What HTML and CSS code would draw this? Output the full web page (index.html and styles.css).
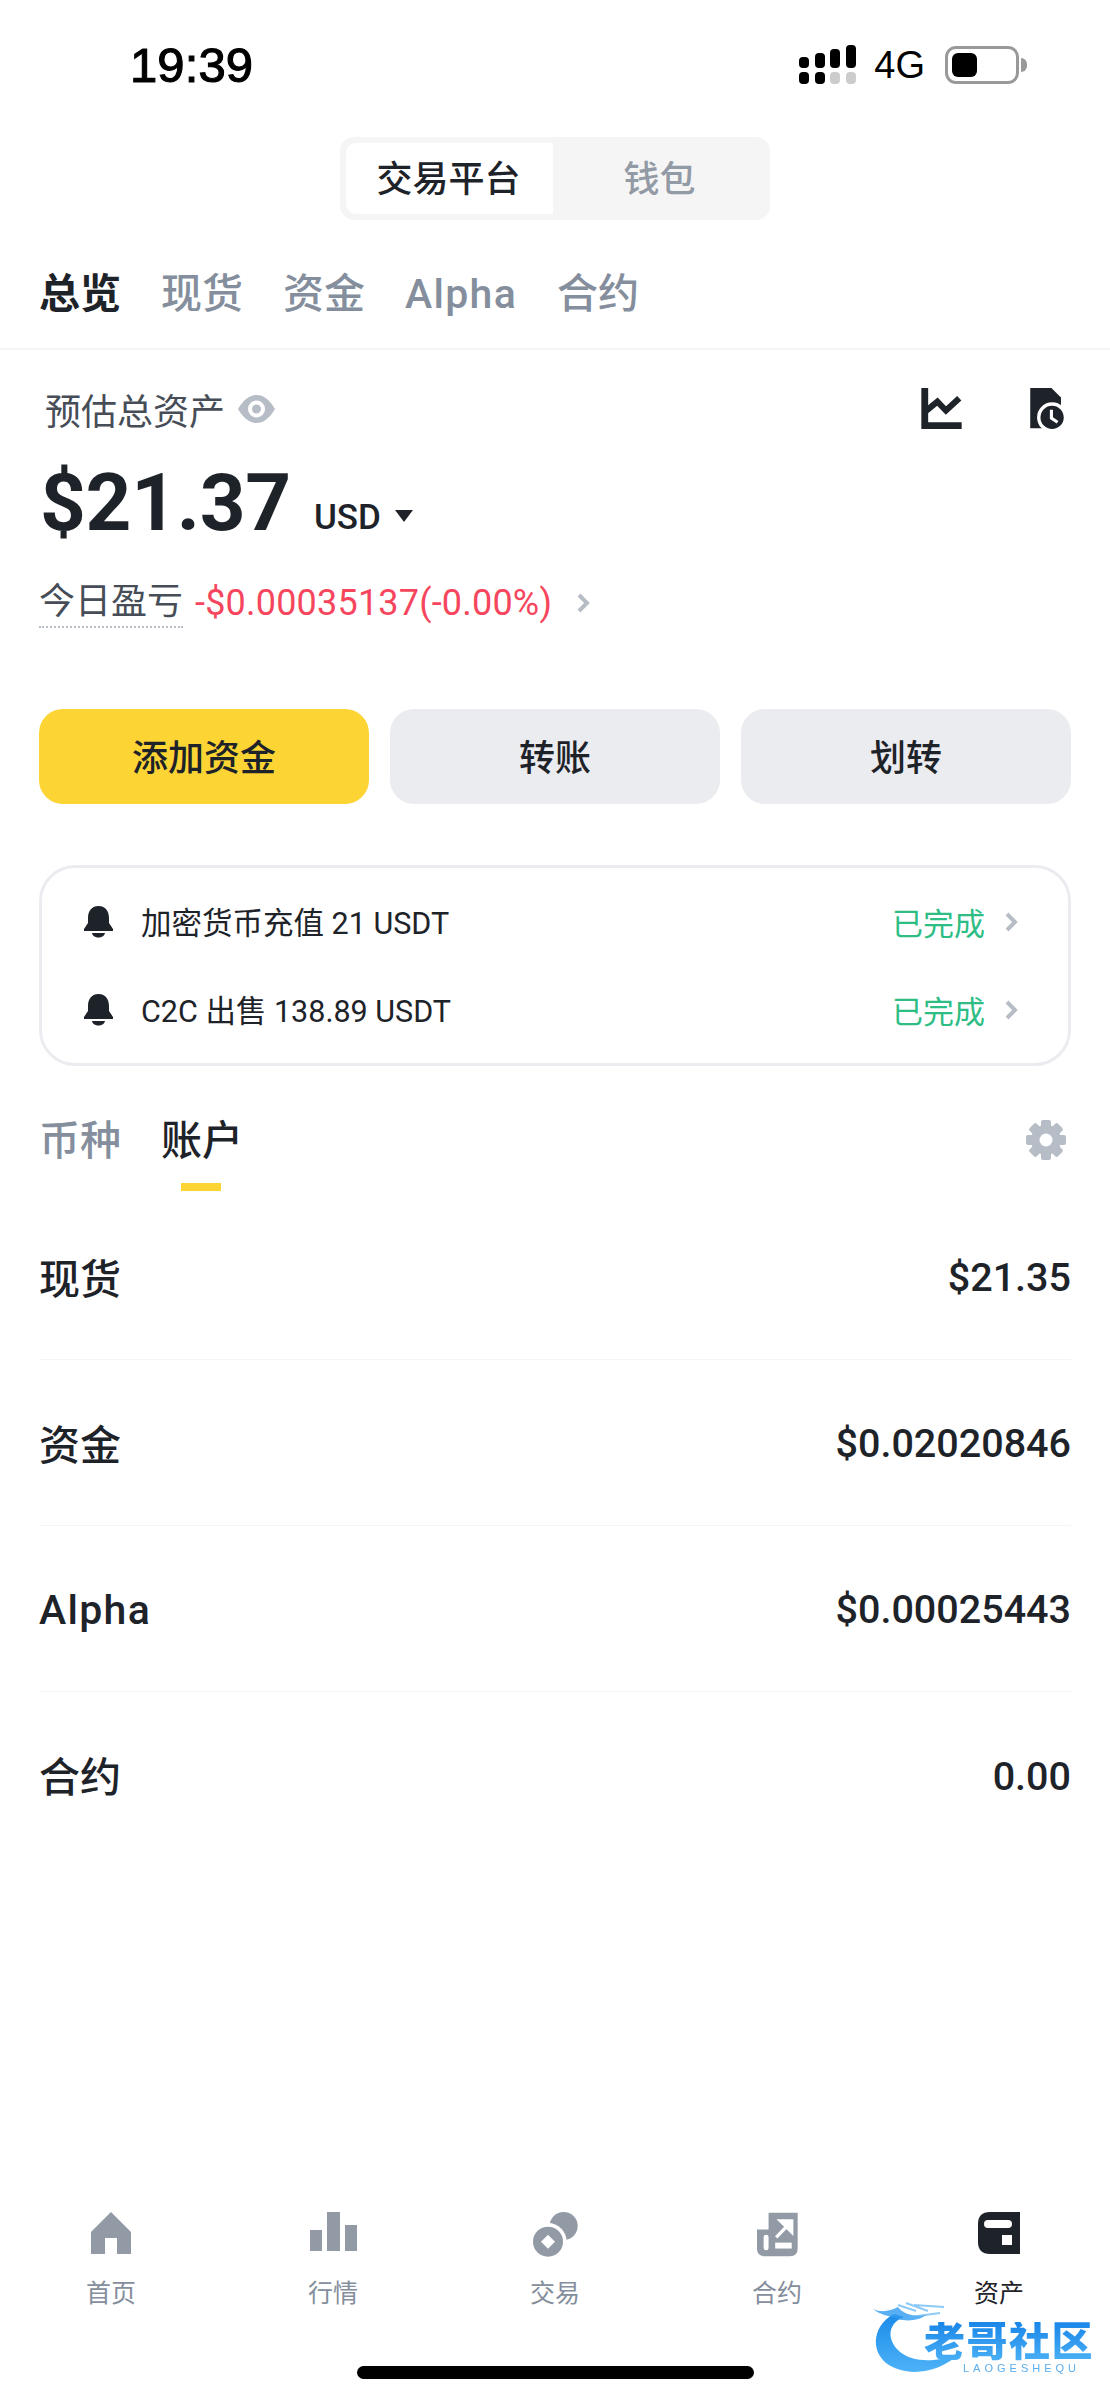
FILE: index.html
```html
<!DOCTYPE html>
<html>
<head>
  <meta charset="UTF-8">
  <title>资产</title>
  <link rel="stylesheet" href="styles.css">
</head>
<body>
<div class="page">

  <div class="status">
    <span class="clock">19:39</span>
    <div class="status-right">
      <svg class="signal" width="58" height="40" viewBox="0 0 58 40">
        <rect x="0" y="12" width="10" height="11" rx="4"/><rect x="16" y="8" width="10" height="15" rx="4"/>
        <rect x="31" y="4" width="10" height="19" rx="4"/><rect x="47" y="0" width="10" height="23" rx="4"/>
        <rect x="0" y="27" width="10" height="12" rx="4"/><rect x="16" y="27" width="10" height="12" rx="4"/>
        <rect class="off" x="31" y="27" width="10" height="12" rx="4"/><rect class="off" x="47" y="27" width="10" height="12" rx="4"/>
      </svg>
      <span class="net">4G</span>
      <div class="battery"><div class="battery-fill"></div></div>
      <div class="battery-nub"></div>
    </div>
  </div>

  <div class="segment">
    <div class="segment-item active">交易平台</div>
    <div class="segment-item">钱包</div>
  </div>

  <div class="tabs">
    <span class="tab active">总览</span>
    <span class="tab">现货</span>
    <span class="tab">资金</span>
    <span class="tab latin">Alpha</span>
    <span class="tab">合约</span>
  </div>

  <div class="content">
    <div class="total-head">
      <span class="total-label">预估总资产</span>
      <svg class="eye" width="37" height="28" viewBox="0 0 37 28">
        <path d="M0 14C6 4 12 0 18.500 0S31 4 37 14C31 24 25 28 18.500 28S6 24 0 14Z" fill="#b7bdc6"/>
        <circle cx="18.500" cy="14" r="8.500" fill="#fff"/><circle cx="18.500" cy="14" r="4.500" fill="#b7bdc6"/>
      </svg>
      <div class="head-icons">
        <svg width="41" height="41" viewBox="64 50 120 120">
          <path d="M65 50H85V150H183V170H65Z" fill="#1e2329"/>
          <path d="M78 118L112 90L137 116L176 80" fill="none" stroke="#1e2329" stroke-width="18"/>
        </svg>
        <svg width="36" height="41" viewBox="388 52 104 120">
          <path d="M388 52H450L478 80V170H388Z" fill="#1e2329"/>
          <circle cx="452" cy="138" r="44" fill="#fff"/>
          <circle cx="452" cy="138" r="34" fill="#1e2329"/>
          <path d="M450 116V140L468 152" fill="none" stroke="#fff" stroke-width="9"/>
        </svg>
      </div>
    </div>

    <div class="balance">
      <span class="amount">$21.37</span>
      <span class="currency">USD</span>
      <svg class="caret" width="18" height="12" viewBox="0 0 18 12"><path d="M0 0H18L9 12Z" fill="#1e2329"/></svg>
    </div>

    <div class="pnl">
      <span class="pnl-label">今日盈亏</span>
      <span class="pnl-value">-$0.00035137(-0.00%)</span>
      <svg class="chev" width="13" height="20" viewBox="0 0 13 20"><path d="M2 2L10 10L2 18" fill="none" stroke="#b7bdc6" stroke-width="4"/></svg>
    </div>

    <div class="actions">
      <div class="btn primary">添加资金</div>
      <div class="btn">转账</div>
      <div class="btn">划转</div>
    </div>

    <div class="notices">
      <div class="notice">
        <svg class="bell" width="29" height="32" viewBox="0 0 29 32"><path d="M14.500 0C7 0 4 6 4 12V17L0 23V25H29V23L25 17V12C25 6 22 0 14.500 0Z M8 27H21C20 33 9 33 8 27Z" fill="#1e2329"/></svg>
        <span class="notice-text">加密货币充值 21 USDT</span>
        <span class="notice-status">已完成</span>
        <svg class="chev" width="13" height="20" viewBox="0 0 13 20"><path d="M2 2L10 10L2 18" fill="none" stroke="#b7bdc6" stroke-width="4"/></svg>
      </div>
      <div class="notice">
        <svg class="bell" width="29" height="32" viewBox="0 0 29 32"><path d="M14.500 0C7 0 4 6 4 12V17L0 23V25H29V23L25 17V12C25 6 22 0 14.500 0Z M8 27H21C20 33 9 33 8 27Z" fill="#1e2329"/></svg>
        <span class="notice-text">C2C 出售 138.89 USDT</span>
        <span class="notice-status">已完成</span>
        <svg class="chev" width="13" height="20" viewBox="0 0 13 20"><path d="M2 2L10 10L2 18" fill="none" stroke="#b7bdc6" stroke-width="4"/></svg>
      </div>
    </div>

    <div class="subtabs">
      <span class="subtab">币种</span>
      <span class="subtab active">账户</span>
      <svg class="gear" width="40" height="40" viewBox="0 0 40 40" fill="#b7bdc6">
        <g>
          <rect x="15" y="0" width="10" height="40" rx="2"/>
          <rect x="15" y="0" width="10" height="40" rx="2" transform="rotate(45 20 20)"/>
          <rect x="15" y="0" width="10" height="40" rx="2" transform="rotate(90 20 20)"/>
          <rect x="15" y="0" width="10" height="40" rx="2" transform="rotate(135 20 20)"/>
        </g>
        <circle cx="20" cy="20" r="15"/>
        <circle cx="20" cy="20" r="6.500" fill="#fff"/>
      </svg>
    </div>

    <div class="accounts">
      <div class="account"><span class="account-name">现货</span><span class="account-value">$21.35</span></div>
      <div class="account"><span class="account-name">资金</span><span class="account-value">$0.02020846</span></div>
      <div class="account"><span class="account-name latin">Alpha</span><span class="account-value">$0.00025443</span></div>
      <div class="account"><span class="account-name">合约</span><span class="account-value">0.00</span></div>
    </div>
  </div>

  <div class="nav">
    <div class="nav-item">
      <svg width="42" height="42" viewBox="0 0 42 42" fill="#929aa5"><path d="M21 0L41 20V42H27V26H15V42H1V20Z"/></svg>
      <span>首页</span>
    </div>
    <div class="nav-item">
      <svg width="47" height="42" viewBox="0 0 47 42" fill="#929aa5"><path d="M0 18H12V39H0Z M17 0H30V39H17Z M35 13H47V39H35Z"/></svg>
      <span>行情</span>
    </div>
    <div class="nav-item">
      <svg width="45" height="45" viewBox="38 35 135 135" fill="#929aa5">
        <circle cx="130" cy="77" r="42"/>
        <circle cx="83" cy="124" r="56" fill="#fff"/>
        <circle cx="83" cy="124" r="45"/>
        <path d="M83 103L104 124L83 145L62 124Z" fill="#fff"/>
      </svg>
      <span>交易</span>
    </div>
    <div class="nav-item">
      <svg width="41" height="45" viewBox="707 30 124 135">
        <path d="M742 32H830V140Q830 163 807 163H730Q707 163 707 140V82H742Z" fill="#929aa5"/>
        <rect x="727" y="98" width="15" height="47" rx="7" fill="#fff"/>
        <rect x="762" y="122" width="50" height="18" fill="#fff"/>
        <path d="M765 106L798 72M778 56H812V90Z" fill="#fff" stroke="#fff" stroke-width="10"/>
      </svg>
      <span>合约</span>
    </div>
    <div class="nav-item active">
      <svg width="42" height="42" viewBox="0 0 42 42">
        <path d="M12 0H42V42H12Q0 42 0 30V12Q0 0 12 0Z" fill="#1e2329"/>
        <rect x="6" y="8" width="28" height="8" rx="4" fill="#fff"/>
        <rect x="24" y="23" width="10" height="10" fill="#fff"/>
      </svg>
      <span>资产</span>
    </div>
  </div>

  <div class="home-bar"></div>

  <div class="watermark">
    <svg class="dragon" width="225" height="85" viewBox="0 0 225 85">
      <defs>
        <linearGradient id="ring" x1="0" y1="0" x2="0" y2="1">
          <stop offset="0" stop-color="#1b8be8"/><stop offset="1" stop-color="#4db2f8"/>
        </linearGradient>
      </defs>
      <path d="M24 19C3 30 0 55 16 68C34 82 68 80 90 58C68 68 42 68 29 56C16 44 18 28 34 22Z" fill="url(#ring)"/>
      <path d="M3 14C12 18 20 16 28 12C34 20 46 22 56 20C50 25 38 27 28 24C20 21 10 20 3 14Z" fill="#2e9bf0" opacity=".8"/>
      <path d="M28 10L46 16M36 8L58 16M44 10L74 12M40 22L70 18" stroke="#5cb4f4" stroke-width="2" fill="none" opacity=".7"/>
    </svg>
    <span class="wm-name">老哥社区</span>
    <span class="wm-sub">LAOGESHEQU</span>
  </div>

</div>
</body>
</html>
```
FILE: styles.css
```css
* { box-sizing: border-box; }
body { margin: 0; background: #fff; color: #1e2329; font-family: "Roboto", "Noto Sans CJK SC", sans-serif; }
.page { position: relative; width: 1110px; height: 2400px; overflow: hidden; display: flex; flex-direction: column; }

.status { height: 130px; display: flex; justify-content: space-between; align-items: center; padding: 0 83px 0 130px; font-family: "Liberation Sans", sans-serif; color: #000; }
.clock { font-size: 49px; letter-spacing: .1px; -webkit-text-stroke: 1.1px #000; }
.status-right { display: flex; align-items: center; }
.signal { fill: #000; margin-right: 17px; }
.signal .off { fill: #ccc; }
.net { font-size: 38px; margin-right: 20px; }
.battery { width: 74px; height: 38px; border: 3px solid #999; border-radius: 11px; padding: 4px; }
.battery-fill { width: 25px; height: 100%; background: #000; border-radius: 6px; }
.battery-nub { width: 6px; height: 14px; margin-left: 2px; background: #999; border-radius: 0 6px 6px 0; }

.segment { align-self: center; margin-top: 7px; width: 430px; height: 83px; padding: 6px; background: #f5f5f5; border-radius: 14px; display: flex; }
.segment-item { flex: 1 1 0; display: flex; align-items: center; justify-content: center; font-size: 36px; line-height: 68px; font-weight: 500; color: #929aa5; padding: 2px 0 0 2px; }
.segment-item.active { flex: 0 0 207px; background: #fff; color: #1e2329; border-radius: 10px 0 0 10px; padding: 2px 2px 0 0; }

.tabs { display: flex; gap: 40px; padding: 49px 39px 0; height: 130px; border-bottom: 2px solid #f5f5f5; }
.tab { font-size: 41px; line-height: 50px; font-weight: 500; color: #848e9c; }
.tab.active { color: #1e2329; font-weight: 700; }
.latin { letter-spacing: 1.300px; }

.content { padding: 0 39px; flex: 1; }
.total-head { display: flex; align-items: center; margin-top: 38px; height: 41px; }
.total-label { font-size: 36px; color: #474d57; margin-left: 6px; }
.eye { margin-left: 13px; }
.head-icons { margin-left: auto; display: flex; gap: 68px; padding-right: 5px; }

.balance { display: flex; align-items: baseline; margin-top: 26px; height: 96px; padding-left: 1px; }
.amount { font-size: 80px; line-height: 96px; font-weight: 700; letter-spacing: -.3px; }
.currency { font-size: 35px; font-weight: 500; margin-left: 23px; transform: translateY(-1px); }
.caret { margin-left: 14px; transform: translateY(-8px); }

.pnl { display: flex; align-items: center; margin-top: 28px; height: 48px; }
.pnl-label { font-size: 36px; line-height: 48px; color: #474d57; border-bottom: 2px dotted #b7bdc6; }
.pnl-value { font-size: 36px; letter-spacing: .2px; color: #f6465d; margin-left: 12px; }
.pnl .chev { margin-left: 25px; }

.actions { display: flex; gap: 21px; margin-top: 82px; }
.btn { flex: 1 1 0; height: 95px; padding-bottom: 3px; border-radius: 24px; background: #eaecef; display: flex; align-items: center; justify-content: center; font-size: 36px; font-weight: 500; }
.btn.primary { background: #fcd535; }

.notices { margin-top: 61px; height: 201px; border: 3px solid #eaecef; border-radius: 36px; padding: 10px 50px 14px 42px; }
.notice { height: 88px; display: flex; align-items: center; }
.notice-text { font-size: 30.500px; color: #1e2329; margin-left: 28px; flex: 1; padding-bottom: 2px; }
.notice-status { font-size: 31px; color: #2ebd85; padding-bottom: 2px; }
.notice .chev { margin-left: 20px; }

.subtabs { display: flex; align-items: flex-start; gap: 40px; margin-top: 50px; height: 75px; }
.subtab { position: relative; font-size: 41px; line-height: 50px; font-weight: 500; color: #848e9c; height: 75px; }
.subtab.active { color: #1e2329; }
.subtab.active::after { content: ""; position: absolute; left: 20px; bottom: 0; width: 40px; height: 8px; background: #fcd535; }
.gear { margin-left: auto; margin-right: 5px; margin-top: 4px; }

.accounts { margin-top: 3px; }
.account { height: 166px; display: flex; justify-content: space-between; align-items: center; font-weight: 500; border-bottom: 1px solid #f5f5f5; }
.account-name { font-size: 41px; padding-bottom: 2px; }
.account-name.latin { padding: 3px 0 0; }
.account-value { font-size: 39.500px; padding-top: 2px; }
.account:last-child { border-bottom: none; }

.nav { display: flex; padding: 0; height: 98px; }
.nav-item { width: 222px; display: flex; flex-direction: column; align-items: center; font-size: 25px; line-height: 36px; color: #848e9c; }
.nav-item span { margin-top: auto; transform: translateY(2px); }
.nav-item.active { color: #1e2329; }
.home-bar { align-self: center; width: 397px; height: 13px; border-radius: 7px; background: #000; margin-top: 56px; margin-bottom: 21px; }

.watermark { position: absolute; left: 870px; top: 2295px; width: 225px; height: 85px; color: #1f8fee; filter: blur(.5px); }
.dragon { position: absolute; left: 0; top: 0; }
.wm-name { position: absolute; left: 54px; top: 27px; font-size: 41px; line-height: 40px; font-weight: 900; letter-spacing: 1.500px; white-space: nowrap; background: linear-gradient(#1a86e8, #4ab0f5); -webkit-background-clip: text; background-clip: text; color: transparent; }
.wm-sub { position: absolute; left: 93px; top: 67px; font-family: "Liberation Sans", sans-serif; font-size: 11px; line-height: 12px; letter-spacing: 4px; color: #5aaef0; white-space: nowrap; }
```
